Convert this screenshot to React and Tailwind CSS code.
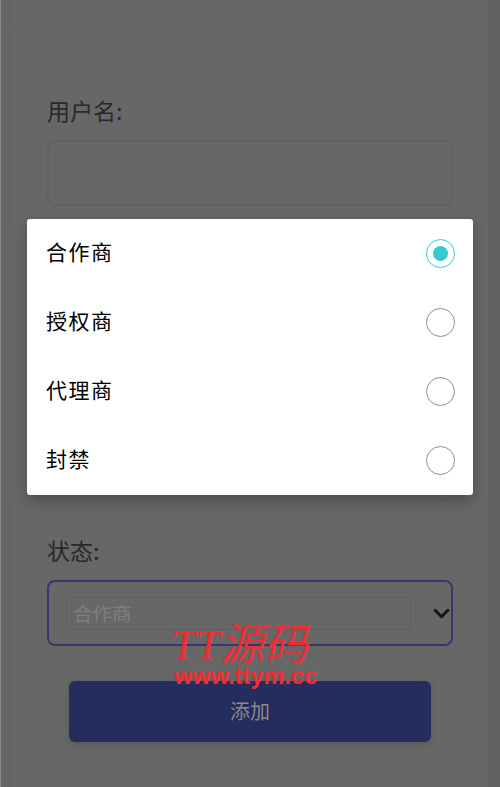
import React from "react";

const font = { fontFamily: '"Noto Sans CJK SC", "Noto Sans", sans-serif' };

function Field({ label, children }) {
  return (
    <div className="flex flex-col">
      <div className="h-[45px] text-[23px] leading-[30px] text-[#26292f]">{label}</div>
      {children}
    </div>
  );
}

function EmptyInput() {
  return <div className="h-[66px] rounded-[8px] border-2 border-[#626262]" />;
}

function Radio({ checked }) {
  return checked ? (
    <div className="flex h-[29px] w-[29px] items-center justify-center rounded-full border-[1.5px] border-[#36cbcb] bg-white">
      <div className="h-[15px] w-[15px] rounded-full bg-[#36cbcb]" />
    </div>
  ) : (
    <div className="h-[29px] w-[29px] rounded-full border-[1.5px] border-[#8f8f8f] bg-white" />
  );
}

const options = [
  { name: "合作商", checked: true },
  { name: "授权商" },
  { name: "代理商" },
  { name: "封禁" },
];

export default function App() {
  return (
    <div
      className="relative flex h-[787px] w-[500px] overflow-hidden bg-[#676767]"
      style={font}
    >
      <div className="h-full w-[12px] shrink-0 border-l border-[#8a8a8a] bg-[#646567]" />
      <div className="flex h-full min-w-0 flex-1 flex-col">
        <div className="h-[25px] border-b border-[#636363]" />
        <div className="flex flex-col gap-[35.8px] pl-[35px] pr-[35px] pt-[70px]">
          <Field label="用户名:">
            <EmptyInput />
          </Field>
          <Field label="密码:">
            <EmptyInput />
          </Field>
          <Field label="确认密码:">
            <EmptyInput />
          </Field>
          <Field label="状态:">
            <div className="flex h-[66px] items-center rounded-[8px] border-2 border-[#35386a] pl-[17px] pr-[2px]">
              <div className="flex h-[33px] w-[345px] shrink-0 items-center border border-[#5f5f5f] pb-[2px] pl-[6px] text-[19.5px] text-[#7e7e7e]">
                合作商
              </div>
              <svg viewBox="0 0 16 16" className="ml-[22px] h-[17px] w-[17px] shrink-0 text-[#161616]" fill="none" stroke="currentColor" strokeWidth="2.8" strokeLinecap="round" strokeLinejoin="round">
                <path d="M2 5l6 6 6-6" />
              </svg>
            </div>
          </Field>
        </div>
        <div className="ml-[57px] mt-[35px] flex h-[61px] w-[362px] items-center justify-center rounded-[6px] bg-[#252c5e] pb-[2px] text-[20px] text-[#8a8a8a] shadow-[0_2px_6px_rgba(0,0,0,0.15)]">
          添加
        </div>
      </div>
      <div className="h-full w-[12px] shrink-0 bg-[#626264]" />

      {/* Modal */}
      <div className="absolute left-[27px] top-[219px] w-[446px] rounded-[3px] bg-white shadow-[0_6px_14px_rgba(0,0,0,0.25)]">
        {options.map((o) => (
          <div key={o.name} className="flex h-[69px] items-center justify-between pl-[19px] pr-[18px]">
            <span className="pb-[4px] text-[21px] leading-none tracking-[1.5px] text-black">{o.name}</span>
            <Radio checked={o.checked} />
          </div>
        ))}
      </div>

      {/* Watermark */}
      <div className="absolute left-[174px] top-[627px] flex w-[146px] flex-col items-start text-[#f52a33]">
        <div className="h-[37px] whitespace-nowrap text-[44px] italic leading-[37px] -ml-[3px]" style={{ fontFamily: '"Liberation Serif", "Noto Sans CJK SC", serif' }}>
          TT源码
        </div>
        <div className="whitespace-nowrap text-[23.6px] font-bold leading-[24px]" style={{ fontFamily: '"Liberation Sans", sans-serif' }}>
          www.ttym.cc
        </div>
      </div>
    </div>
  );
}
